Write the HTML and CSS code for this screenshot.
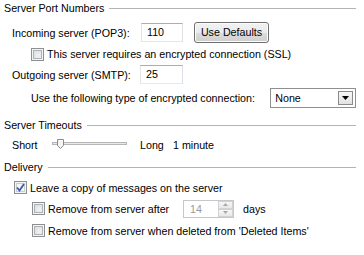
FILE: index.html
```html
<!DOCTYPE html>
<html>
<head>
<meta charset="utf-8">
<link rel="stylesheet" href="styles.css">
</head>
<body>
<div class="panel">
  <div class="group-head h1"><span class="gtitle">Server Port Numbers</span><span class="gline"></span></div>

  <div class="row r-in">
    <span class="label">Incoming server (POP3):</span>
    <span class="textbox tb-in">110</span>
    <span class="button">Use Defaults</span>
  </div>

  <div class="row r-ssl">
    <span class="check"></span>
    <span class="ctext">This server requires an encrypted connection (SSL)</span>
  </div>

  <div class="row r-out">
    <span class="label label-out">Outgoing server (SMTP):</span>
    <span class="textbox tb-out">25</span>
  </div>

  <div class="row r-enc">
    <span class="enc-label">Use the following type of encrypted connection:</span>
    <span class="combo">
      <span class="combo-text">None</span>
      <span class="combo-btn">
        <svg width="7" height="4" viewBox="0 0 7 4"><path d="M0 0H7L3.5 4Z" fill="#000"/></svg>
      </span>
    </span>
  </div>

  <div class="group-head h2"><span class="gtitle">Server Timeouts</span><span class="gline"></span></div>

  <div class="row r-slider">
    <span class="short">Short</span>
    <span class="slider">
      <svg width="78" height="12" viewBox="0 0 78 12">
        <rect x="2.5" y="4.5" width="74" height="2" fill="#e7eaea" stroke="#b6b6b6"/>
        <path d="M7.5 1.5H13.5V7.5L10.5 10.5L7.5 7.5Z" fill="#f4f4f4" stroke="#8a8a8a"/>
        <path d="M8.5 2.5H12.5" stroke="#ffffff"/>
      </svg>
    </span>
    <span class="long">Long</span>
    <span class="minute">1 minute</span>
  </div>

  <div class="group-head h3"><span class="gtitle">Delivery</span><span class="gline"></span></div>

  <div class="row r-leave">
    <span class="check checked">
      <svg width="9" height="9" viewBox="0 0 9 9"><path d="M1 4.5L3.5 7.5L8 1" fill="none" stroke="#3c5aa6" stroke-width="1.8"/></svg>
    </span>
    <span class="ctext">Leave a copy of messages on the server</span>
  </div>

  <div class="row r-after">
    <span class="check"></span>
    <span class="ctext after-text">Remove from server after</span>
    <span class="spin">
      <span class="spin-text">14</span>
      <span class="spin-btns">
        <span class="spin-b"><svg width="5" height="3" viewBox="0 0 5 3"><path d="M0 3H5L2.5 0Z" fill="#a8a8a8"/></svg></span>
        <span class="spin-b"><svg width="5" height="3" viewBox="0 0 5 3"><path d="M0 0H5L2.5 3Z" fill="#a8a8a8"/></svg></span>
      </span>
    </span>
    <span class="days">days</span>
  </div>

  <div class="row r-del">
    <span class="check"></span>
    <span class="ctext">Remove from server when deleted from 'Deleted Items'</span>
  </div>
</div>
</body>
</html>
```
FILE: styles.css
```css
html, body {
  margin: 0;
  padding: 0;
  background: #ffffff;
}
body {
  width: 364px;
  height: 255px;
  overflow: hidden;
  font-family: "Liberation Sans", Arial, sans-serif;
  font-size: 10.7px;
  color: #000;
}
.panel {
  display: flex;
  flex-direction: column;
  padding: 0 8px 0 4px;
}
.group-head {
  display: flex;
  align-items: center;
  height: 16px;
}
.gtitle {
  white-space: nowrap;
}
.gline {
  flex: 1;
  height: 1px;
  background: #b4b4b4;
  margin-left: 5px;
}
.h2 { margin-top: 9px; }
.h3 { margin-top: 4px; }

.row {
  display: flex;
  align-items: center;
  white-space: nowrap;
}
.label {
  width: 129px;
  padding-left: 8px;
}
.label-out { width: 128px; }

.r-in { height: 21px; margin-top: 6px; }
.textbox {
  box-sizing: border-box;
  height: 19px;
  width: 42px;
  border: 1px solid;
  border-color: #abadb3 #dbdfe6 #e3e9ef #e2e3ea;
  padding-left: 5px;
  line-height: 17px;
}
.tb-out { width: 43px; }
.button {
  box-sizing: border-box;
  margin-left: 11px;
  width: 75px;
  height: 21px;
  border: 1px solid #707070;
  border-radius: 3px;
  background: linear-gradient(#f2f2f2 0%, #ebebeb 50%, #dddddd 50%, #cfcfcf 100%);
  box-shadow: inset 0 0 0 1px #fcfcfc;
  text-align: center;
  line-height: 19px;
}

.r-ssl { height: 22px; padding-left: 27px; }
.check {
  box-sizing: border-box;
  width: 13px;
  height: 13px;
  border: 1px solid #8f8f8f;
  background: #f4f4f4;
  box-shadow: inset 0 0 0 1px #f4f4f4, inset 0 0 0 2px #aeb3b9, inset 1px 1px 4px 2px #d8dadd;
  display: flex;
  align-items: center;
  justify-content: center;
  flex: none;
}
.check.checked {
  box-shadow: inset 0 0 0 1px #f4f4f4, inset 0 0 0 2px #c9cdd3;
  background: #f6f6f6;
}
.ctext { margin-left: 3px; }

.r-out { height: 19px; }
.r-enc { height: 20px; margin-top: 4px; padding-left: 27px; }
.enc-label { width: 240px; }
.combo {
  box-sizing: border-box;
  width: 86px;
  height: 20px;
  border: 1px solid #8e8f8f;
  display: flex;
  align-items: center;
  padding: 0 1px 0 4px;
}
.combo-text { flex: 1; }
.combo-btn {
  box-sizing: border-box;
  width: 15px;
  height: 14px;
  border: 1px solid #8a8a8a;
  background: linear-gradient(#f7f7f7, #e2e2e2);
  display: flex;
  align-items: center;
  justify-content: center;
  margin-right: 1px;
}

.r-slider { height: 20px; margin-top: 2px; padding-left: 8px; }
.short { width: 38px; }
.slider { display: flex; width: 90px; margin-top: -2px; }
.long { width: 33px; }

.r-leave { height: 21px; margin-top: 2px; padding-left: 10px; }
.r-after { height: 21px; padding-left: 28px; }
.after-text { width: 135px; }
.spin {
  box-sizing: border-box;
  width: 51px;
  height: 18px;
  border: 1px solid #c4c7cc;
  display: flex;
  align-items: center;
}
.spin-text {
  flex: 1;
  color: #9a9a9a;
  padding-left: 6px;
}
.spin-btns {
  display: flex;
  flex-direction: column;
  width: 15px;
  height: 16px;
}
.spin-b {
  box-sizing: border-box;
  flex: 1;
  border: 1px solid #d2d2d2;
  background: linear-gradient(#f6f6f6, #e8e8e8);
  display: flex;
  align-items: center;
  justify-content: center;
}
.days { margin-left: 9px; }
.r-del { height: 21px; margin-top: 1px; padding-left: 28px; }
```
